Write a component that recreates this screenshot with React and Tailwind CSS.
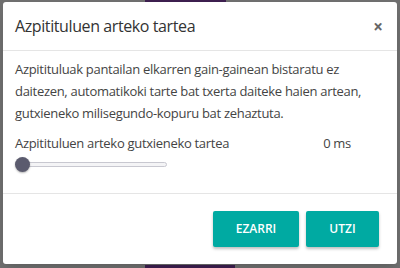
export default function App() {
  return (
    <div className="relative h-[268px] w-[400px] overflow-hidden bg-[#6f6f6f] font-['Open_Sans',sans-serif]">
      <div className="absolute left-[145px] top-0 h-[2px] w-[81px] bg-[#3d1f4f]" />
      <div className="absolute bottom-0 left-[145px] h-[3px] w-[90px] bg-[#3d1f4f]" />
      <div className="absolute left-[3px] top-[2px] flex h-[262px] w-[394px] flex-col rounded-[3px] bg-white shadow-lg">
        <div className="flex h-[49px] items-center justify-between border-b border-[#e5e5e5] pl-[12px] pr-[14px]">
          <h2 className="text-[16px] tracking-[-0.4px] text-[#333]">Azpitituluen arteko tartea</h2>
          <button className="text-[17px] font-bold leading-none text-[#666]">×</button>
        </div>
        <div className="flex h-[143px] flex-col border-b border-[#e5e5e5] px-[12px] pt-[7px]">
          <p className="text-[13px] leading-[22px] tracking-[-0.3px] text-[#444]">
            Azpitituluak pantailan elkarren gain-gainean bistaratu ez daitezen, automatikoki tarte bat txerta daiteke haien artean, gutxieneko milisegundo-kopuru bat zehaztuta.
          </p>
          <div className="mt-[10px] flex items-center justify-between pr-[34px] text-[13px] tracking-[-0.3px] text-[#444]">
            <span>Azpitituluen arteko gutxieneko tartea</span>
            <span>0 ms</span>
          </div>
          <div className="relative mt-[3px] h-[15px] w-[152px]">
            <div className="absolute left-[2px] right-0 top-[5px] h-[5px] rounded-full border border-[#c8c8d0] bg-[#f4f4f6]" />
            <div className="absolute left-0 top-0 h-[15px] w-[15px] rounded-full bg-[#5b5b6e] shadow-[0_1px_2px_rgba(0,0,0,0.3)]" />
          </div>
        </div>
        <div className="flex flex-1 items-center justify-end gap-[7px] pr-[18px]">
          <button className="h-[36px] w-[86px] rounded-[2px] bg-[#00aaa2] text-[12px] font-semibold text-white shadow-[0_2px_3px_rgba(0,0,0,0.25)]">EZARRI</button>
          <button className="h-[36px] w-[73px] rounded-[2px] bg-[#00aaa2] text-[12px] font-semibold text-white shadow-[0_2px_3px_rgba(0,0,0,0.25)]">UTZI</button>
        </div>
      </div>
    </div>
  );
}
